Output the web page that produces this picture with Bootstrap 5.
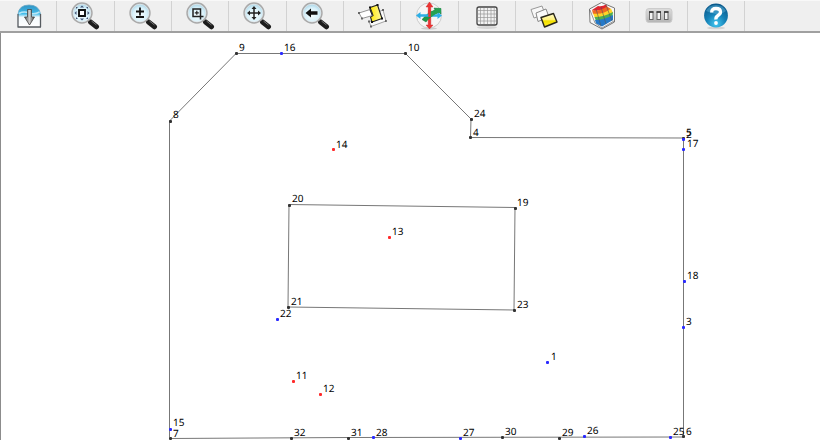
<!DOCTYPE html>
<html lang="en">
<head>
<meta charset="utf-8">
<meta name="viewport" content="width=device-width, initial-scale=1">
<title>Survey plan</title>
<link href="https://cdn.jsdelivr.net/npm/bootstrap@5.3.0/dist/css/bootstrap.min.css" rel="stylesheet">
<style>
body { background: #fff; font-family: "Noto Sans", "DejaVu Sans", sans-serif; }
.toolstrip { background: #efefef; border-top: 1px solid #f8f8f8; border-bottom: 2px solid #a0a0a0; }
.tools { max-width: 745px; }
.tool { flex: 1 1 0; min-width: 0; height: 30px; border-right: 1px solid #d2d2d2 !important; }
.tool:hover { background: #e4eaf0; }
.tool svg { display: block; width: 30px; height: 30px; }
.plan { border-left: 1px solid #8c8c8c; }
.plan svg { display: block; width: 100%; height: auto; }
.walls { fill: none; stroke: #777; stroke-width: 1; }
.labels { font-size: 10px; font-weight: 400; fill: #000; text-rendering: geometricPrecision; }
.corner { fill: #333; } .station { fill: #2a2aff; } .detail { fill: #ff2a2a; }
</style>
</head>
<body>
<svg width="0" height="0" class="position-absolute" aria-hidden="true">
  <defs>
    <radialGradient id="glass" cx=".5" cy=".6" r=".55"><stop offset="0" stop-color="#f6fdff"/><stop offset=".65" stop-color="#d9f1fa"/><stop offset="1" stop-color="#a9d5e6"/></radialGradient>
    <linearGradient id="sky" x2="0" y2="1"><stop offset="0" stop-color="#2f93c4"/><stop offset=".4" stop-color="#45bdea"/><stop offset=".55" stop-color="#f3fafd"/><stop offset="1" stop-color="#fff"/></linearGradient>
    <linearGradient id="steel"><stop offset="0" stop-color="#555"/><stop offset=".5" stop-color="#ccc"/><stop offset="1" stop-color="#444"/></linearGradient>
    <linearGradient id="gold" x2="1" y2="0"><stop offset="0" stop-color="#ffe800"/><stop offset="1" stop-color="#fff9a8"/></linearGradient>
    <linearGradient id="goldDown" x2="0" y2="1"><stop offset="0" stop-color="#fffbd0"/><stop offset=".45" stop-color="#fff27a"/><stop offset=".55" stop-color="#f4e000"/><stop offset="1" stop-color="#ffee22"/></linearGradient>
    <linearGradient id="silver" x2="0" y2="1"><stop offset="0" stop-color="#ddd"/><stop offset="1" stop-color="#b5b5b5"/></linearGradient>
    <radialGradient id="ball" cx=".5" cy=".85" r=".8"><stop offset="0" stop-color="#43c8f2"/><stop offset=".5" stop-color="#1683b8"/><stop offset="1" stop-color="#0b5a8c"/></radialGradient>
    <g id="lens">
      <path d="M18 18.500L20.500 21" stroke="#999" stroke-width="3"/>
      <path d="M20.500 21L26.500 25.800" stroke="#1c1c1c" stroke-width="5" stroke-linecap="round"/>
      <path d="M21.500 20L26.500 24" stroke="#777" stroke-width="1"/>
      <circle cx="12" cy="12" r="9.800" fill="url(#glass)" stroke="#aaa" stroke-width="1.800"/>
      <circle cx="12" cy="12" r="8.800" fill="none" stroke="#e9eef0" stroke-width=".7"/>
    </g>
  </defs>
</svg>

<header class="toolstrip">
  <div class="tools d-flex" role="toolbar" aria-label="Plan tools">
    <button type="button" class="tool btn rounded-0 border-0 p-0 d-flex justify-content-center" aria-label="Import">
      <svg viewBox="-1 0 30 30"><path d="M4 26V13Q5 4 15 4T26.500 13V26Z" fill="url(#sky)"/><path d="M4 26V13M26.500 13V26M3.500 26H27" stroke="#565b60" stroke-width="1.300"/><path d="M4 13Q5 4 15 4T26.500 13" fill="none" stroke="#6ba7c3" stroke-width=".8"/><path d="M5 12.500Q10 10 15 12T25.500 11" stroke="#b8e6f6" fill="none" stroke-width="1.500"/><path d="M13.500 8.500H17.500V16H20.500L15.500 24L10.500 16H13.500Z" fill="url(#steel)" stroke="#444" stroke-width=".8"/></svg>
    </button>
    <button type="button" class="tool btn rounded-0 border-0 p-0 d-flex justify-content-center" aria-label="Zoom to extents">
      <svg viewBox="0 0 30 30"><use href="#lens"/><path d="M9 9H15V15H9Z" fill="#fff" stroke="#111" stroke-width="1.900"/><path d="M12 4.500L14 6.500H10ZM12 19.500L14 17.500H10ZM4.500 12L6.500 10V14ZM19.500 12L17.500 10V14ZM6 6H8L6 8ZM18 6H16L18 8ZM6 18H8L6 16ZM18 18H16L18 16Z" fill="#457"/></svg>
    </button>
    <button type="button" class="tool btn rounded-0 border-0 p-0 d-flex justify-content-center" aria-label="Zoom in or out">
      <svg viewBox="0 0 30 30"><use href="#lens"/><path d="M12 6.500V14.500M8 10.500H16M8 16H16" stroke="#151515" stroke-width="1.800"/></svg>
    </button>
    <button type="button" class="tool btn rounded-0 border-0 p-0 d-flex justify-content-center" aria-label="Zoom to window">
      <svg viewBox="0 0 30 30"><use href="#lens"/><path d="M8 8H15.500V15.500H8ZM15.500 12V18.500M11 15.500H18.500" fill="none" stroke="#222" stroke-width="1.500"/><path d="M11.800 9.800V13.800M9.800 11.800H13.800" stroke="#222" stroke-width="1.200"/></svg>
    </button>
    <button type="button" class="tool btn rounded-0 border-0 p-0 d-flex justify-content-center" aria-label="Pan">
      <svg viewBox="0 0 30 30"><use href="#lens"/><path d="M12 7V17M7 12H17" stroke="#222" stroke-width="1.500"/><path d="M12 5L14.500 8H9.500ZM12 19L14.500 16H9.500ZM5 12L8 9.500V14.500ZM19 12L16 9.500V14.500Z" fill="#222"/></svg>
    </button>
    <button type="button" class="tool btn rounded-0 border-0 p-0 d-flex justify-content-center" aria-label="Previous view">
      <svg viewBox="0 0 30 30"><use href="#lens"/><path d="M5.500 12L11 7.500V10.200H17.500V13.800H11V16.500Z" fill="#111"/></svg>
    </button>
    <button type="button" class="tool btn rounded-0 border-0 p-0 d-flex justify-content-center" aria-label="Snap to objects">
      <svg viewBox="0 0 30 30"><path d="M12 20.500L14 25.500L29 20L26 9L21 11L23 18Z" fill="#fafafa" stroke="#999" stroke-width=".9"/><path d="M13 6.500L20.500 4L25 17.500L15 21L13.500 16L16 14.500L14.800 11Z" fill="url(#gold)" stroke="#222" stroke-width="1.100"/><path d="M2 12L13 8.500L15.500 14.500L5 17.500Z" fill="#fff" stroke="#888" stroke-width=".9"/><path d="M13 8.500L15.500 14.500" stroke="#222" stroke-width="1.200"/><path d="M12 5.500h2v2h-2zM19.500 3h2v2h-2zM24 16.500h2v2h-2zM14 20h2v2h-2z" fill="#111"/><path d="M1 11h2v2H1zM4 16.500h2v2H4zM25 8h2v2h-2zM28 19h1.800v2h-1.800zM13 24.500h2v2h-2zM11 19.500h2v2h-2z" fill="#666"/></svg>
    </button>
    <button type="button" class="tool btn rounded-0 border-0 p-0 d-flex justify-content-center" aria-label="Orbit view">
      <svg viewBox="0 0 30 30"><ellipse cx="15" cy="27.500" rx="8" ry="1.200" fill="#ccc"/><circle cx="15" cy="14.500" r="12.500" fill="#f6f6f6" stroke="#ccc"/><path d="M14.200 24V6H12L15.500 1L19 6H16.800V24H19L15.500 28L12 24Z" fill="#ee3434" stroke="#c22020" stroke-width=".4"/><path d="M8 18.500Q14 11 21 9L20 7L27 7.500L27 13L25 11.500Q17 14 12 21Z" fill="#1f9a49" stroke="#16703a" stroke-width=".5"/><path d="M2 14.500L6.500 11V13.200H23.500V11L28 14.500L23.500 18V15.800H6.500V18Z" fill="#2daee5"/><path d="M15.500 12Q19 9.500 22 9L21 7.500L27 7.500V12.500L25.500 11.200Q20 13 17.500 16L15 15.500Z" fill="#26a052"/><path d="M14.300 9V16H16.700V9Z" fill="#e33"/></svg>
    </button>
    <button type="button" class="tool btn rounded-0 border-0 p-0 d-flex justify-content-center" aria-label="Grid">
      <svg viewBox="0 0 30 30"><ellipse cx="15" cy="26.500" rx="10" ry="1.500" fill="#d5d5d5"/><rect x="5" y="6" width="20" height="18" rx="2" fill="#f2f2f2" stroke="#444" stroke-width="1.300"/><path d="M8.500 7V23M12 7V23M15.500 7V23M19 7V23M22.200 7V23M6 9.500H24M6 13H24M6 16.500H24M6 20H24" stroke="#999" stroke-width=".7"/></svg>
    </button>
    <button type="button" class="tool btn rounded-0 border-0 p-0 d-flex justify-content-center" aria-label="Layers">
      <svg viewBox="0 0 30 30"><path d="M2 8.500L13 5L16 13L5 17Z" fill="#f8f8f8" stroke="#999"/><path d="M7 12L17 8L20 16L9 20.500Z" fill="#fafafa" stroke="#888"/><path d="M12 16.500L24.500 12.500L28 21L15.500 26Z" fill="url(#goldDown)" stroke="#29261a" stroke-width="1.400" stroke-linejoin="round"/></svg>
    </button>
    <button type="button" class="tool btn rounded-0 border-0 p-0 d-flex justify-content-center" aria-label="Surface model">
      <svg viewBox="-1 0 30 30"><path d="M2.500 8L14.500 1.500L27.500 7V21L15 28L3 21.500Z" fill="#f8f8f8" stroke="#777"/><path d="M5 9L11 5Q15 6 19 3.500L21 7Q15 10 8 10Z" fill="#dd2630"/><path d="M5 9Q12 11 20 5.500L24 8Q17 15 6 13Z" fill="#f16a22"/><path d="M6 12.500Q16 14 24 7.500L26 12Q18 17 8 17Z" fill="#ffd527"/><path d="M7.500 16Q17 16 26 11L25.500 15Q18 20 9 20Z" fill="#4cae54"/><path d="M8 19Q17 19 26 14V19L15 25.500L9 22.500Z" fill="#2579c8"/><path d="M3 9L8 22L15 27L27 20M9 8L14 25M14 6L19 23M19 4L25 20" fill="none" stroke="#555" stroke-width=".6"/></svg>
    </button>
    <button type="button" class="tool btn rounded-0 border-0 p-0 d-flex justify-content-center" aria-label="Columns">
      <svg viewBox="0 0 30 30"><rect x="2" y="7.500" width="26" height="14" rx="3" fill="url(#silver)" stroke="#ccc"/><g fill="#f3f3f3" stroke="#666"><rect x="5.500" y="11" width="3.500" height="7.500"/><rect x="13" y="11" width="3.500" height="7.500"/><rect x="20.500" y="11" width="3.500" height="7.500"/></g><path d="M5 11H9.500M12.500 11H17M20 11H24.500" stroke="#333" stroke-width="1.500"/></svg>
    </button>
    <button type="button" class="tool btn rounded-0 border-0 p-0 d-flex justify-content-center" aria-label="Help">
      <svg viewBox="0 0 30 30"><ellipse cx="15" cy="27" rx="9" ry="1.300" fill="#d3d3d3"/><circle cx="15" cy="14.500" r="11.900" fill="url(#ball)"/><path d="M5 10Q8 4 15 4T25 10Q20 14 15 13T5 10Z" fill="#65b8dc" opacity=".45"/><path d="M10.700 11.500Q10.500 7.500 15 7.500T19.500 11Q19.500 13 17 14.500T15 18.500" fill="none" stroke="#fff" stroke-width="3.300"/><circle cx="15" cy="22" r="1.900" fill="#fff"/></svg>
    </button>
  </div>
</header>

<main class="plan">
  <svg viewBox="1 33 819 407" role="img" aria-label="Site plan with numbered survey points">
    <g class="walls">
      <path d="M169.500 437.500V121L236 53.500H405.500L471 119L470.500 137.500L683.500 138V437L348 437.500L169.500 438.500"/>
      <path d="M289 204.500L515 207.500L514 310L288 307Z"/>
    </g>
    <g id="points"></g>
    <g id="labels" class="labels"></g>
  </svg>
</main>

<script src="https://cdn.jsdelivr.net/npm/bootstrap@5.3.0/dist/js/bootstrap.bundle.min.js"></script>
<script>
// [number, x, y, kind, label x, label baseline]
const survey = [
  [9, 236, 53, "corner", 239, 51], [16, 281, 53, "station", 284, 51],
  [10, 405, 53, "corner", 408, 51], [8, 170, 121, "corner", 173, 118],
  [24, 471, 119, "corner", 474, 117], [4, 470, 137, "corner", 473, 136],
  [14, 333, 149, "detail", 336, 148], [5, 683, 138, "corner", 686, 136],
  [2, 683, 139, "station", 686, 138], [17, 683, 149, "station", 687, 147],
  [20, 289, 205, "corner", 292, 202], [19, 515, 208, "corner", 517, 206],
  [13, 389, 237, "detail", 392, 235], [18, 684, 281, "station", 687, 279],
  [21, 288, 307, "corner", 291, 305], [22, 277, 319, "station", 280, 317],
  [23, 514, 310, "corner", 517, 308], [3, 683, 327, "station", 686, 325],
  [1, 547, 362, "station", 551, 360], [11, 293, 381, "detail", 296, 379],
  [12, 320, 394, "detail", 323, 392], [15, 170, 429, "station", 173, 426],
  [7, 170, 438, "corner", 173, 437], [32, 291, 438, "corner", 294, 436],
  [31, 348, 438, "corner", 351, 436], [28, 373, 437, "station", 376, 436],
  [27, 460, 438, "station", 463, 436], [30, 502, 437, "corner", 505, 435],
  [29, 559, 438, "corner", 562, 436], [26, 584, 436, "station", 587, 434],
  [25, 670, 437, "station", 673, 435], [6, 683, 436, "corner", 686, 435]
];
const make = (tag, attrs, parent) => {
  const node = document.createElementNS("http://www.w3.org/2000/svg", tag);
  for (const key in attrs) node.setAttribute(key, attrs[key]);
  return document.getElementById(parent).appendChild(node);
};
for (const [number, x, y, kind, lx, ly] of survey) {
  make("rect", { x: x - 1, y: y - 1, width: 3, height: 3, rx: 1, class: kind }, "points");
  make("text", { x: lx, y: ly }, "labels").textContent = number;
}
</script>
</body>
</html>
